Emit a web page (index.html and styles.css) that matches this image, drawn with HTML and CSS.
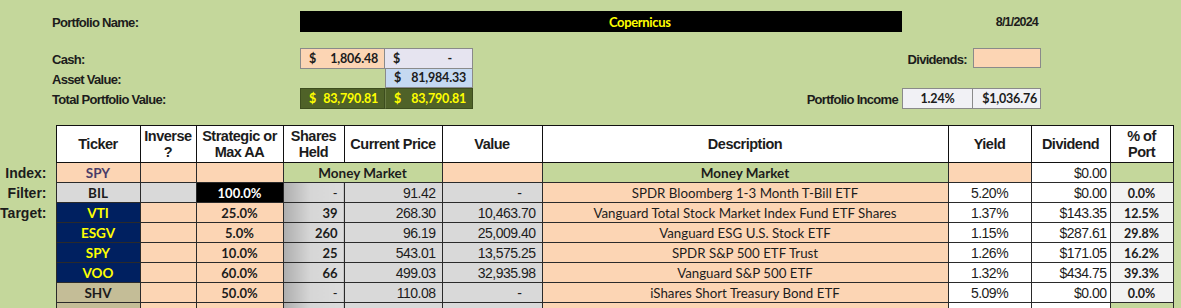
FILE: index.html
```html
<!DOCTYPE html>
<html>
<head>
<meta charset="utf-8">
<title>Portfolio</title>
<link rel="stylesheet" href="styles.css">
</head>
<body>
<div class="sheet">
  <div class="top">
    <div class="lbl row1">Portfolio Name:</div>
    <div class="namebar">Copernicus</div>
    <div class="date">8/1/2024</div>

    <div class="lbl row2">Cash:</div>
    <div class="box cash"><span>$</span><span>1,806.48</span></div>
    <div class="box lav"><span>$</span><span class="dash">-</span></div>
    <div class="divlbl">Dividends:</div>
    <div class="divbox"></div>

    <div class="lbl row3">Asset Value:</div>
    <div class="box blue"><span>$</span><span>81,984.33</span></div>

    <div class="lbl row4">Total Portfolio Value:</div>
    <div class="box olive o1"><span>$</span><span>83,790.81</span></div>
    <div class="box olive o2"><span>$</span><span>83,790.81</span></div>
    <div class="pilbl">Portfolio Income</div>
    <div class="pi p1">1.24%</div>
    <div class="pi p2">$1,036.76</div>
  </div>

  <table class="grid">
    <colgroup>
      <col class="w-side"><col class="w-tick"><col class="w-inv"><col class="w-aa"><col class="w-sh">
      <col class="w-pr"><col class="w-val"><col class="w-desc"><col class="w-yld"><col class="w-div"><col class="w-pct">
    </colgroup>
    <thead>
      <tr>
        <th class="side"></th>
        <th>Ticker</th>
        <th>Inverse<br>?</th>
        <th>Strategic or<br>Max AA</th>
        <th>Shares<br>Held</th>
        <th>Current Price</th>
        <th>Value</th>
        <th>Description</th>
        <th>Yield</th>
        <th>Dividend</th>
        <th>% of<br>Port</th>
      </tr>
    </thead>
    <tbody>
      <tr>
        <th class="side">Index:</th>
        <td class="tk idx">SPY</td>
        <td class="or"></td>
        <td class="or"></td>
        <td class="mm" colspan="2">Money Market</td>
        <td class="or"></td>
        <td class="mm">Money Market</td>
        <td class="or"></td>
        <td class="dv">$0.00</td>
        <td class="gn"></td>
      </tr>
      <tr>
        <th class="side">Filter:</th>
        <td class="tk gy">BIL</td>
        <td class="gy"></td>
        <td class="aa blk">100.0%</td>
        <td class="sh"><span class="dsh">-</span></td>
        <td class="num gy">91.42</td>
        <td class="num gy"><span class="vdash">-</span></td>
        <td class="desc">SPDR Bloomberg 1-3 Month T-Bill ETF</td>
        <td class="yld">5.20%</td>
        <td class="dv">$0.00</td>
        <td class="pct">0.0%</td>
      </tr>
      <tr>
        <th class="side">Target:</th>
        <td class="tk navy">VTI</td>
        <td class="or"></td>
        <td class="aa or">25.0%</td>
        <td class="sh">39</td>
        <td class="num gy">268.30</td>
        <td class="num gy">10,463.70</td>
        <td class="desc">Vanguard Total Stock Market Index Fund ETF Shares</td>
        <td class="yld">1.37%</td>
        <td class="dv">$143.35</td>
        <td class="pct">12.5%</td>
      </tr>
      <tr>
        <th class="side"></th>
        <td class="tk navy">ESGV</td>
        <td class="or"></td>
        <td class="aa or">5.0%</td>
        <td class="sh">260</td>
        <td class="num gy">96.19</td>
        <td class="num gy">25,009.40</td>
        <td class="desc">Vanguard ESG U.S. Stock ETF</td>
        <td class="yld">1.15%</td>
        <td class="dv">$287.61</td>
        <td class="pct">29.8%</td>
      </tr>
      <tr>
        <th class="side"></th>
        <td class="tk navy">SPY</td>
        <td class="or"></td>
        <td class="aa or">10.0%</td>
        <td class="sh">25</td>
        <td class="num gy">543.01</td>
        <td class="num gy">13,575.25</td>
        <td class="desc">SPDR S&amp;P 500 ETF Trust</td>
        <td class="yld">1.26%</td>
        <td class="dv">$171.05</td>
        <td class="pct">16.2%</td>
      </tr>
      <tr>
        <th class="side"></th>
        <td class="tk navy">VOO</td>
        <td class="or"></td>
        <td class="aa or">60.0%</td>
        <td class="sh">66</td>
        <td class="num gy">499.03</td>
        <td class="num gy">32,935.98</td>
        <td class="desc">Vanguard S&amp;P 500 ETF</td>
        <td class="yld">1.32%</td>
        <td class="dv">$434.75</td>
        <td class="pct">39.3%</td>
      </tr>
      <tr>
        <th class="side"></th>
        <td class="tk tan">SHV</td>
        <td class="or"></td>
        <td class="aa or">50.0%</td>
        <td class="sh"><span class="dsh">-</span></td>
        <td class="num gy">110.08</td>
        <td class="num gy"><span class="vdash">-</span></td>
        <td class="desc">iShares Short Treasury Bond ETF</td>
        <td class="yld">5.09%</td>
        <td class="dv">$0.00</td>
        <td class="pct">0.0%</td>
      </tr>
      <tr>
        <th class="side"></th>
        <td class="tk tan"></td>
        <td class="or"></td>
        <td class="aa or"></td>
        <td class="sh"></td>
        <td class="num gy"></td>
        <td class="num gy"></td>
        <td class="desc"></td>
        <td class="yld"></td>
        <td class="dv"></td>
        <td class="gn"></td>
      </tr>
    </tbody>
  </table>
</div>
</body>
</html>
```

FILE: styles.css
```css
html, body {
  margin: 0;
  padding: 0;
}

body {
  background: #c4d79b;
  width: 1181px;
  height: 308px;
  overflow: hidden;
  color: #1c1c1c;
  font-family: "Liberation Sans", Arial, sans-serif;
}

.sheet {
  width: 1181px;
}

/* ---------- top summary block ---------- */
.top {
  display: grid;
  grid-template-columns: 52px 248px 85px 88px 429px 71px 68px 140px;
  grid-template-rows: 21px 16px 21px 19px 21px;
  padding: 11px 0 16px;
  font-size: 13px;
  font-weight: bold;
  letter-spacing: -0.7px;
}

.lbl {
  grid-column: 2;
  padding-top: 2px;
  line-height: 19px;
}
.lbl.row3 { line-height: 17px; }
.row1 { grid-row: 1; }
.row2 { grid-row: 3; }
.row3 { grid-row: 4; }
.row4 { grid-row: 5; }

.namebar {
  grid-row: 1;
  grid-column: 3 / 6;
  background: #000;
  color: #ffff00;
  font-family: Lato, "Liberation Sans", sans-serif;
  font-size: 13px;
  letter-spacing: -0.35px;
  padding-left: 309px;
  padding-top: 1px;
  line-height: 20px;
}

.date {
  grid-row: 1;
  grid-column: 6 / 8;
  text-align: right;
  padding-right: 3px;
  padding-top: 2px;
  font-size: 12.5px;
  letter-spacing: -0.8px;
  line-height: 19px;
}

.box {
  display: flex;
  justify-content: space-between;
  box-sizing: border-box;
  padding: 0 6px 0 8px;
  font-family: Lato, "Liberation Sans", sans-serif;
  font-size: 12.5px;
  letter-spacing: -0.2px;
  line-height: 19px;
  border: 1px solid #8a8a8a;
}
.box .dash { padding-right: 14px; }

.cash { grid-row: 3; grid-column: 3; background: #fcd5b4; }
.lav { grid-row: 3; grid-column: 4; background: #e6e4f0; border-left: none; }
.blue { grid-row: 4; grid-column: 4; background: #c5d9f1; border-top: none; line-height: 18px; }
.olive {
  grid-row: 5;
  background: #4f6228;
  color: #ffff00;
  border-color: #3d4d1e;
}
.o1 { grid-column: 3; }
.o2 { grid-column: 4; border-left: 1px solid #6b7d45; }

.divlbl {
  grid-row: 3;
  grid-column: 5 / 7;
  text-align: right;
  padding-right: 6px;
  padding-top: 2px;
  line-height: 19px;
}
.divbox {
  grid-row: 3;
  grid-column: 7;
  height: 20px;
  box-sizing: border-box;
  background: #fcd5b4;
  border: 1px solid #8a8a8a;
}

.pilbl {
  grid-row: 5;
  grid-column: 5;
  text-align: right;
  padding-right: 4px;
  padding-top: 2px;
  line-height: 19px;
}
.pi {
  grid-row: 5;
  box-sizing: border-box;
  background: #f1f1f5;
  border: 1px solid #8a8a8a;
  font-family: Lato, "Liberation Sans", sans-serif;
  font-size: 12.5px;
  letter-spacing: -0.2px;
  line-height: 19px;
}
.p1 { grid-column: 6; text-align: center; }
.p2 { grid-column: 7; text-align: right; padding-right: 3px; border-left: none; }

/* ---------- main table ---------- */
.grid {
  border-collapse: collapse;
  table-layout: fixed;
  width: 1173px;
}

.w-side { width: 56px; }
.w-tick { width: 84px; }
.w-inv { width: 56px; }
.w-aa { width: 87px; }
.w-sh { width: 61px; }
.w-pr { width: 98px; }
.w-val { width: 100px; }
.w-desc { width: 406px; }
.w-yld { width: 83px; }
.w-div { width: 79px; }
.w-pct { width: 63px; }

.grid thead th {
  height: 36px;
  padding: 0 1px;
  background: #fff;
  border: 1px solid #111;
  font-size: 14.5px;
  letter-spacing: -0.5px;
  line-height: 16.5px;
  font-weight: bold;
  text-align: center;
  vertical-align: middle;
}

.grid thead th.side,
.grid tbody th.side {
  background: transparent;
  border: none;
}

.grid tbody th.side {
  font-size: 14px;
  font-weight: bold;
  text-align: right;
  padding: 3px 9px 0 0;
  height: 16px;
  line-height: 15px;
  vertical-align: top;
}

.grid td {
  height: 16px;
  padding: 3px 6px 0;
  line-height: 15px;
  vertical-align: top;
  border: 1px solid #2a2a2a;
  font-size: 14px;
  letter-spacing: -0.5px;
  white-space: nowrap;
  overflow: hidden;
}

.tk,
.aa,
.mm,
.sh,
.desc,
.pct {
  font-family: Lato, "Liberation Sans", sans-serif;
  letter-spacing: 0 !important;
}

.tk {
  text-align: center;
  font-weight: bold;
  font-size: 13.5px !important;
}
.idx { background: #fcd5b4; color: #4a3d68; }
.navy { background: #002060; color: #ffff00; }
.tan { background: #c4bd97; }

.or { background: #fcd5b4; }
.gy { background: #d9d9d9; }
.gn { background: #c4d79b; }
.blk { background: #000; color: #fff; }

.aa {
  text-align: center;
  font-weight: bold;
  font-size: 13px !important;
}

.mm {
  background: #c4d79b;
  text-align: center;
  font-weight: bold;
  font-size: 13.5px !important;
}

.sh {
  background: linear-gradient(to right, #adadad, #d6d6d6 45%, #dcdcdc);
  text-align: right;
  font-weight: bold;
  font-size: 13px !important;
}
.dsh { font-weight: normal; }

.num { text-align: right; }
.vdash { padding-right: 14px; }

.desc {
  background: #fcd5b4;
  text-align: center;
  font-size: 13.3px !important;
}

.yld { background: #fff; text-align: center; }
.dv { background: #fff; text-align: right; padding-right: 3px !important; }
.pct {
  background: #f2f2f2;
  text-align: center;
  font-weight: bold;
  font-size: 12.5px !important;
}
```
